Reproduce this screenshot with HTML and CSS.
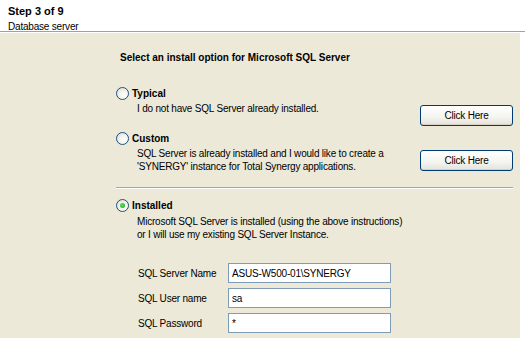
FILE: index.html
```html
<!DOCTYPE html>
<html lang="en">
<head>
    <meta charset="UTF-8">
    <title>Step 3 of 9 - Database server</title>
    <link rel="stylesheet" href="styles.css">
</head>
<body>
    <div class="header">
        <div class="step">Step 3 of 9</div>
        <div class="subtitle">Database server</div>
    </div>

    <div class="panel">
        <div class="title">Select an install option for Microsoft SQL Server</div>

        <div class="option typical">
            <div class="option-label"><span class="radio"></span>Typical</div>
            <div class="option-body">
                <div class="desc">I do not have SQL Server already installed.</div>
                <button class="btn">Click Here</button>
            </div>
        </div>

        <div class="option custom">
            <div class="option-label"><span class="radio"></span>Custom</div>
            <div class="option-body">
                <div class="desc">SQL Server is already installed and I would like to create a<br>'SYNERGY' instance for Total Synergy applications.</div>
                <button class="btn">Click Here</button>
            </div>
        </div>

        <div class="divider"></div>

        <div class="option installed">
            <div class="option-label"><span class="radio checked"></span>Installed</div>
            <div class="option-body">
                <div class="desc">Microsoft SQL Server is installed (using the above instructions)<br>or I will use my existing SQL Server Instance.</div>
            </div>
        </div>

        <div class="fields">
            <div class="field">
                <span class="field-label">SQL Server Name</span>
                <div class="input">ASUS-W500-01\SYNERGY</div>
            </div>
            <div class="field">
                <span class="field-label">SQL User name</span>
                <div class="input">sa</div>
            </div>
            <div class="field">
                <span class="field-label">SQL Password</span>
                <div class="input">*</div>
            </div>
        </div>
    </div>
</body>
</html>
```

FILE: styles.css
```css
body {
    margin: 0;
    background: #ffffff;
    font-family: "Liberation Sans", Arial, sans-serif;
    font-size: 10px;
    letter-spacing: -0.2px;
    line-height: 13px;
    color: #000000;
}
.header {
    height: 32px;
    padding-left: 8px;
    padding-top: 5px;
    box-sizing: border-box;
    border-bottom: 1px solid #a0a0a0;
}
.step {
    font-weight: bold;
    font-size: 11px;
    letter-spacing: 0;
}
.subtitle {
    margin-top: 2px;
}
.panel {
    width: 521px;
    height: 307px;
    box-sizing: border-box;
    background: #ece9d8;
    border-top: 1px solid #ffffff;
    border-right: 1px solid #ffffff;
    border-bottom: 1px solid #ffffff;
    padding: 18px 7px 0 116px;
}
.title {
    font-weight: bold;
    letter-spacing: 0;
    padding-left: 4px;
}
.option-label {
    display: flex;
    align-items: center;
    font-weight: bold;
    letter-spacing: 0;
    height: 13px;
}
.typical {
    margin-top: 23px;
}
.custom {
    margin-top: 6px;
}
.option-body {
    display: flex;
    justify-content: space-between;
    align-items: flex-start;
    margin-top: 2px;
}
.desc {
    padding-left: 21px;
}
.typical .btn {
    margin-top: 3px;
}
.custom .btn {
    margin-top: 3px;
}
.radio {
    width: 11px;
    height: 11px;
    border: 1px solid #1c5180;
    border-radius: 50%;
    background: radial-gradient(circle at 65% 65%, #ffffff 0%, #f2f2ee 45%, #d8d6cb 100%);
    margin-right: 3px;
    display: flex;
    align-items: center;
    justify-content: center;
    box-sizing: content-box;
}
.radio.checked::after {
    content: "";
    width: 5px;
    height: 5px;
    border-radius: 50%;
    background: radial-gradient(circle at 40% 40%, #5ee05e, #21a121);
}
.btn {
    width: 93px;
    height: 21px;
    font-family: inherit;
    font-size: 10px;
    letter-spacing: -0.2px;
    color: #000000;
    border: 1px solid #003c74;
    border-radius: 3px;
    background: linear-gradient(#ffffff, #f4f4f0 60%, #e3e2da);
    box-shadow: inset 0 -1px 0 #d6d0c5;
    padding: 0;
}
.divider {
    margin-top: 14px;
    height: 1px;
    background: #aca899;
    border-bottom: 1px solid #ffffff;
}
.installed {
    margin-top: 10px;
}
.installed .option-body {
    margin-top: 3px;
}
.fields {
    margin-top: 22px;
    padding-left: 22px;
    display: flex;
    flex-direction: column;
    gap: 5px;
}
.field {
    display: flex;
    align-items: center;
}
.field-label {
    width: 90px;
}
.input {
    width: 158px;
    height: 18px;
    border: 1px solid #7f9db9;
    background: #ffffff;
    padding-left: 3px;
    box-sizing: content-box;
    display: flex;
    align-items: center;
}
```
